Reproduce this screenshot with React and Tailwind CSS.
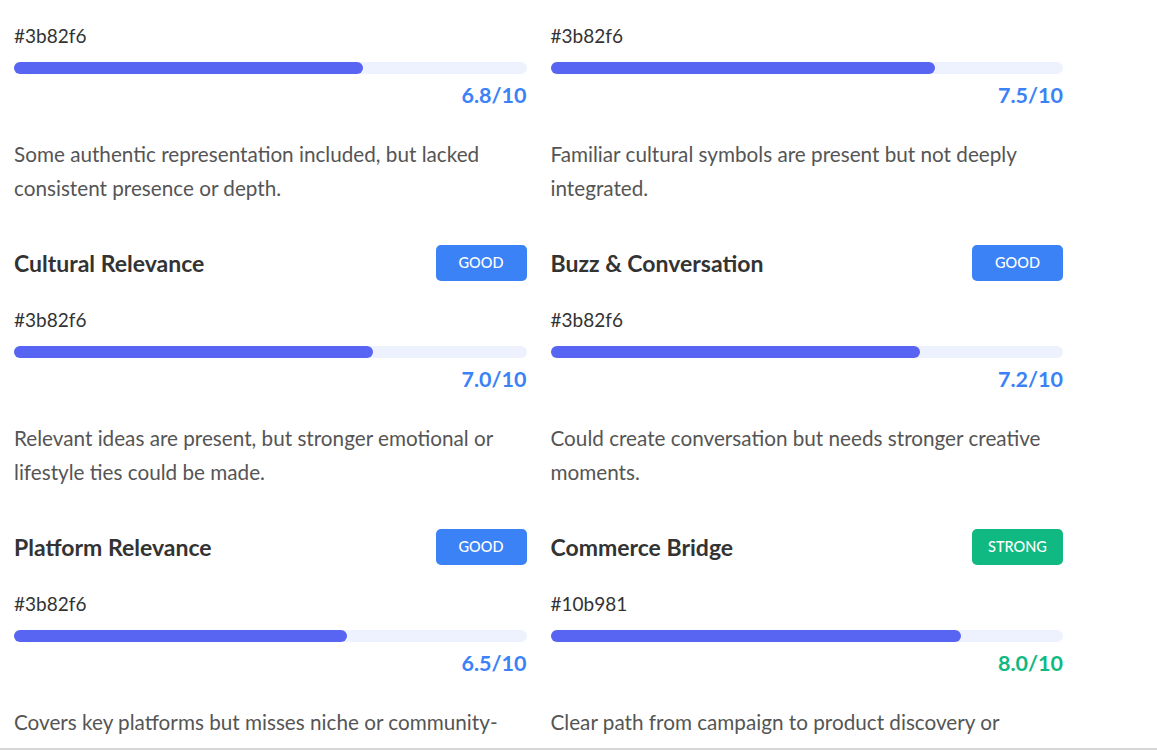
import React from 'react';

// Metric cards: scored dimensions of the campaign review.
// The first row is scrolled so its headers sit above the visible area.
const metrics = [
  {
    title: 'Authentic Representation',
    status: 'GOOD',
    color: '#3b82f6',
    score: 6.8,
    note: 'Some authentic representation included, but lacked consistent presence or depth.',
    scrolled: true,
  },
  {
    title: 'Cultural Symbols',
    status: 'GOOD',
    color: '#3b82f6',
    score: 7.5,
    note: 'Familiar cultural symbols are present but not deeply integrated.',
    scrolled: true,
  },
  {
    title: 'Cultural Relevance',
    status: 'GOOD',
    color: '#3b82f6',
    score: 7.0,
    note: 'Relevant ideas are present, but stronger emotional or lifestyle ties could be made.',
  },
  {
    title: 'Buzz & Conversation',
    status: 'GOOD',
    color: '#3b82f6',
    score: 7.2,
    note: 'Could create conversation but needs stronger creative moments.',
  },
  {
    title: 'Platform Relevance',
    status: 'GOOD',
    color: '#3b82f6',
    score: 6.5,
    note: 'Covers key platforms but misses niche or community-driven spaces.',
  },
  {
    title: 'Commerce Bridge',
    status: 'STRONG',
    color: '#10b981',
    score: 8.0,
    note: 'Clear path from campaign to product discovery or purchase is outlined.',
  },
];

function MetricCard({ m }) {
  const strong = m.status === 'STRONG';
  return (
    <div className="flex flex-col">
      {!m.scrolled && (
        <div className="mb-[27px] flex h-9 items-center justify-between">
          <h3 className="text-[23px] font-bold text-[#333333]">{m.title}</h3>
          <span
            className={`flex h-9 w-[91px] items-center justify-center rounded-[5px] text-[14.5px] font-medium text-white ${
              strong ? 'bg-[#10b981]' : 'bg-[#3b82f6]'
            }`}
          >
            {m.status}
          </span>
        </div>
      )}

      <div className="text-[19px] leading-6 text-[#333333]">{m.color}</div>

      <div className="mt-[14px] h-3 w-full rounded-full bg-[#eef2fe]">
        <div
          className="h-3 rounded-full bg-[#5865f2]"
          style={{ width: `${m.score * 10}%` }}
        />
      </div>

      <div
        className={`mt-[7px] text-right text-[21.5px] font-bold leading-7 ${
          strong ? 'text-[#10b981]' : 'text-[#3b82f6]'
        }`}
      >
        {m.score.toFixed(1)}/10
      </div>

      <p className="mt-[28px] text-[20.7px] leading-[34px] text-[#555555]">{m.note}</p>
    </div>
  );
}

export default function App() {
  return (
    <div
      className="h-[750px] w-full overflow-hidden border-b-2 border-[#d6d6d6] bg-white"
      style={{ fontFamily: 'Lato, "Noto Sans", sans-serif' }}
    >
      <div className="grid w-[1063px] grid-cols-2 gap-x-6 gap-y-10 pl-[14px] pt-6">
        {metrics.map((m) => (
          <MetricCard key={m.title} m={m} />
        ))}
      </div>
    </div>
  );
}
